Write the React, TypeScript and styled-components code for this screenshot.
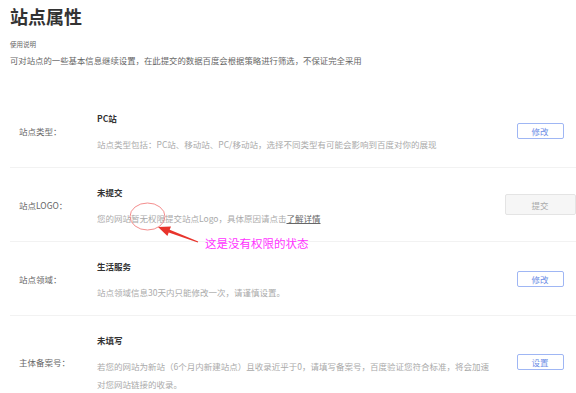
import React from "react";
import styled, { createGlobalStyle } from "styled-components";

const Global = createGlobalStyle`
  html, body { margin: 0; padding: 0; background: #fff; }
  body { font-family: "Noto Sans CJK SC", "Noto Sans", sans-serif; color: #333; }
`;

const Page = styled.div`
  position: relative;
  width: 576px;
  height: 393px;
  overflow: hidden;
  padding: 5px 0 0 10px;
  box-sizing: border-box;
`;

const Title = styled.h1`
  margin: 0;
  font-size: 18px;
  line-height: 22px;
  font-weight: 700;
  color: #333;
`;

const Note = styled.div<{ $small?: boolean }>`
  font-size: ${(p) => (p.$small ? "6.5px" : "8.4px")};
  line-height: 16px;
  color: #666;
`;

const NoteBlock = styled.div`
  margin-top: 9px;
`;

const List = styled.div`
  margin-top: 26px;
`;

const Row = styled.div`
  display: flex;
  align-items: center;
  padding: 14.5px 0;
  border-bottom: 1px solid #f2f2f2;
`;

const Label = styled.div`
  width: 78px;
  padding-left: 9px;
  flex: none;
  font-size: 8.5px;
  color: #666;
`;

const Content = styled.div`
  flex: 1;
  padding-right: 15px;
`;

const ItemTitle = styled.div`
  font-size: 8.5px;
  line-height: 18px;
  font-weight: 700;
  color: #333;
  margin-bottom: 8px;
`;

const Desc = styled.div`
  font-size: 8.5px;
  line-height: 18px;
  color: #aaa;
`;

const Link = styled.a`
  color: #666;
  text-decoration: underline;
`;

const Action = styled.div`
  width: 72px;
  flex: none;
  display: flex;
  justify-content: center;
`;

const Button = styled.button<{ $disabled?: boolean }>`
  box-sizing: border-box;
  font-family: inherit;
  font-size: 8.5px;
  padding: 0;
  border-radius: 2px;
  cursor: pointer;
  width: ${(p) => (p.$disabled ? "71px" : "47px")};
  height: ${(p) => (p.$disabled ? "21px" : "16px")};
  border: 1px solid ${(p) => (p.$disabled ? "#e4e4e4" : "#9fb6f4")};
  background: ${(p) => (p.$disabled ? "#f6f6f6" : "#fff")};
  color: ${(p) => (p.$disabled ? "#aaa" : "#6e8ee6")};
`;

const Annotation = styled.div`
  position: absolute;
  left: 0;
  top: 0;
  width: 576px;
  height: 393px;
  pointer-events: none;
`;

const AnnotationText = styled.span`
  position: absolute;
  left: 205px;
  top: 235px;
  font-size: 11.5px;
  line-height: 16px;
  color: #ff33ff;
  white-space: nowrap;
`;

type Item = {
  label: string;
  title: string;
  desc: React.ReactNode;
  button: string;
  disabled?: boolean;
};

const items: Item[] = [
  {
    label: "站点类型：",
    title: "PC站",
    desc: "站点类型包括：PC站、移动站、PC/移动站，选择不同类型有可能会影响到百度对你的展现",
    button: "修改",
  },
  {
    label: "站点LOGO：",
    title: "未提交",
    desc: (
      <>
        您的网站暂无权限提交站点Logo，具体原因请点击<Link>了解详情</Link>
      </>
    ),
    button: "提交",
    disabled: true,
  },
  {
    label: "站点领域：",
    title: "生活服务",
    desc: "站点领域信息30天内只能修改一次，请谨慎设置。",
    button: "修改",
  },
  {
    label: "主体备案号：",
    title: "未填写",
    desc: "若您的网站为新站（6个月内新建站点）且收录近乎于0，请填写备案号，百度验证您符合标准，将会加速对您网站链接的收录。",
    button: "设置",
  },
];

export default function App() {
  return (
    <>
      <Global />
      <Page>
        <Title>站点属性</Title>
        <NoteBlock>
          <Note $small>使用说明</Note>
          <Note>可对站点的一些基本信息继续设置，在此提交的数据百度会根据策略进行筛选，不保证完全采用</Note>
        </NoteBlock>
        <List>
          {items.map((it) => (
            <Row key={it.label}>
              <Label>{it.label}</Label>
              <Content>
                <ItemTitle>{it.title}</ItemTitle>
                <Desc>{it.desc}</Desc>
              </Content>
              <Action>
                <Button $disabled={it.disabled}>{it.button}</Button>
              </Action>
            </Row>
          ))}
        </List>
        <Annotation>
          <svg width="576" height="393" viewBox="0 0 576 393">
            <ellipse cx="147.5" cy="216.5" rx="17.5" ry="13.5" fill="none" stroke="#f07070" strokeWidth="0.8" />
            <polygon
              points="158,227 171,226.5 169.7,229.8 198.2,241.5 197.8,242.5 168.7,232.6 167.4,235.9"
              fill="#e8342c"
            />
          </svg>
          <AnnotationText>这是没有权限的状态</AnnotationText>
        </Annotation>
      </Page>
    </>
  );
}
